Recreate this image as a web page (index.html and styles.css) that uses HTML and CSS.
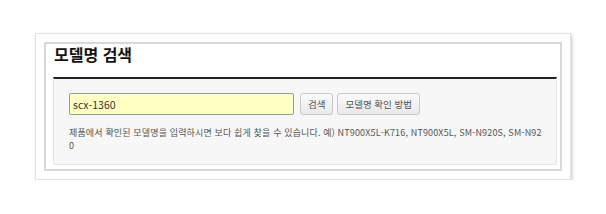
FILE: index.html
```html
<!DOCTYPE html>
<html lang="ko">

<head>
    <meta charset="UTF-8">
    <meta name="viewport" content="width=device-width, initial-scale=1.0">
    <title>모델명 검색</title>
    <link rel="stylesheet" href="styles.css">
</head>

<body>
    <div class="card">
        <div class="model-search">
            <h2 class="model-title">모델명 검색</h2>
            <div class="model-body">
                <div class="search-row">
                    <input type="text" class="search-input" value="scx-1360">
                    <button class="btn">검색</button>
                    <button class="btn">모델명 확인 방법</button>
                </div>
                <p class="search-help">제품에서 확인된 모델명을 입력하시면 보다 쉽게 찾을 수 있습니다. 예) NT900X5L-K716, NT900X5L, SM-N920S, SM-N920</p>
            </div>
        </div>
    </div>
</body>

</html>
```

FILE: styles.css
```css
* {
    margin: 0;
    padding: 0;
    box-sizing: border-box;
}

body {
    background: #ffffff;
    font-family: "Noto Sans CJK KR", "Noto Sans", sans-serif;
    color: #333;
}

.card {
    width: 536px;
    margin: 33px 0 0 35px;
    padding: 8px;
    background: #ffffff;
    border: 1px solid #e2e2e2;
    box-shadow: 1px 2px 3px rgba(0, 0, 0, .22);
}

.model-search {
    border: 2px solid #d8d8d8;
    padding: 0 3px 4px 7px;
}

.model-title {
    height: 33px;
    padding: 0 0 0 1px;
    font-size: 16px;
    line-height: 21px;
    font-weight: bold;
    color: #141414;
}

.model-body {
    background: #f7f7f7;
    border-top: 2px solid #222;
    border-left: 1px solid #e6e6e6;
    border-right: 1px solid #e6e6e6;
    border-bottom: 1px solid #e6e6e6;
    padding: 14px 12px 12px 15px;
}

.search-row {
    display: flex;
    align-items: center;
    gap: 4px;
}

.search-input {
    width: 225px;
    height: 22px;
    margin-right: 2px;
    padding: 0 3px;
    background: #ffffc4;
    border: 1px solid #8fa0a8;
    border-radius: 2px;
    font-family: "Noto Sans CJK KR", "Noto Sans", sans-serif;
    font-size: 10.5px;
    color: #333;
    outline: none;
}

.btn {
    height: 22px;
    padding: 0 7px;
    background: linear-gradient(#fafafa, #e9e9e9);
    border: 1px solid #c9c9c9;
    border-radius: 3px;
    font-family: "Noto Sans CJK KR", "Noto Sans", sans-serif;
    font-size: 9.5px;
    color: #555;
}

.search-help {
    margin-top: 11px;
    font-size: 9px;
    line-height: 13px;
    letter-spacing: 0.15px;
    color: #555;
    word-break: break-all;
}
```
